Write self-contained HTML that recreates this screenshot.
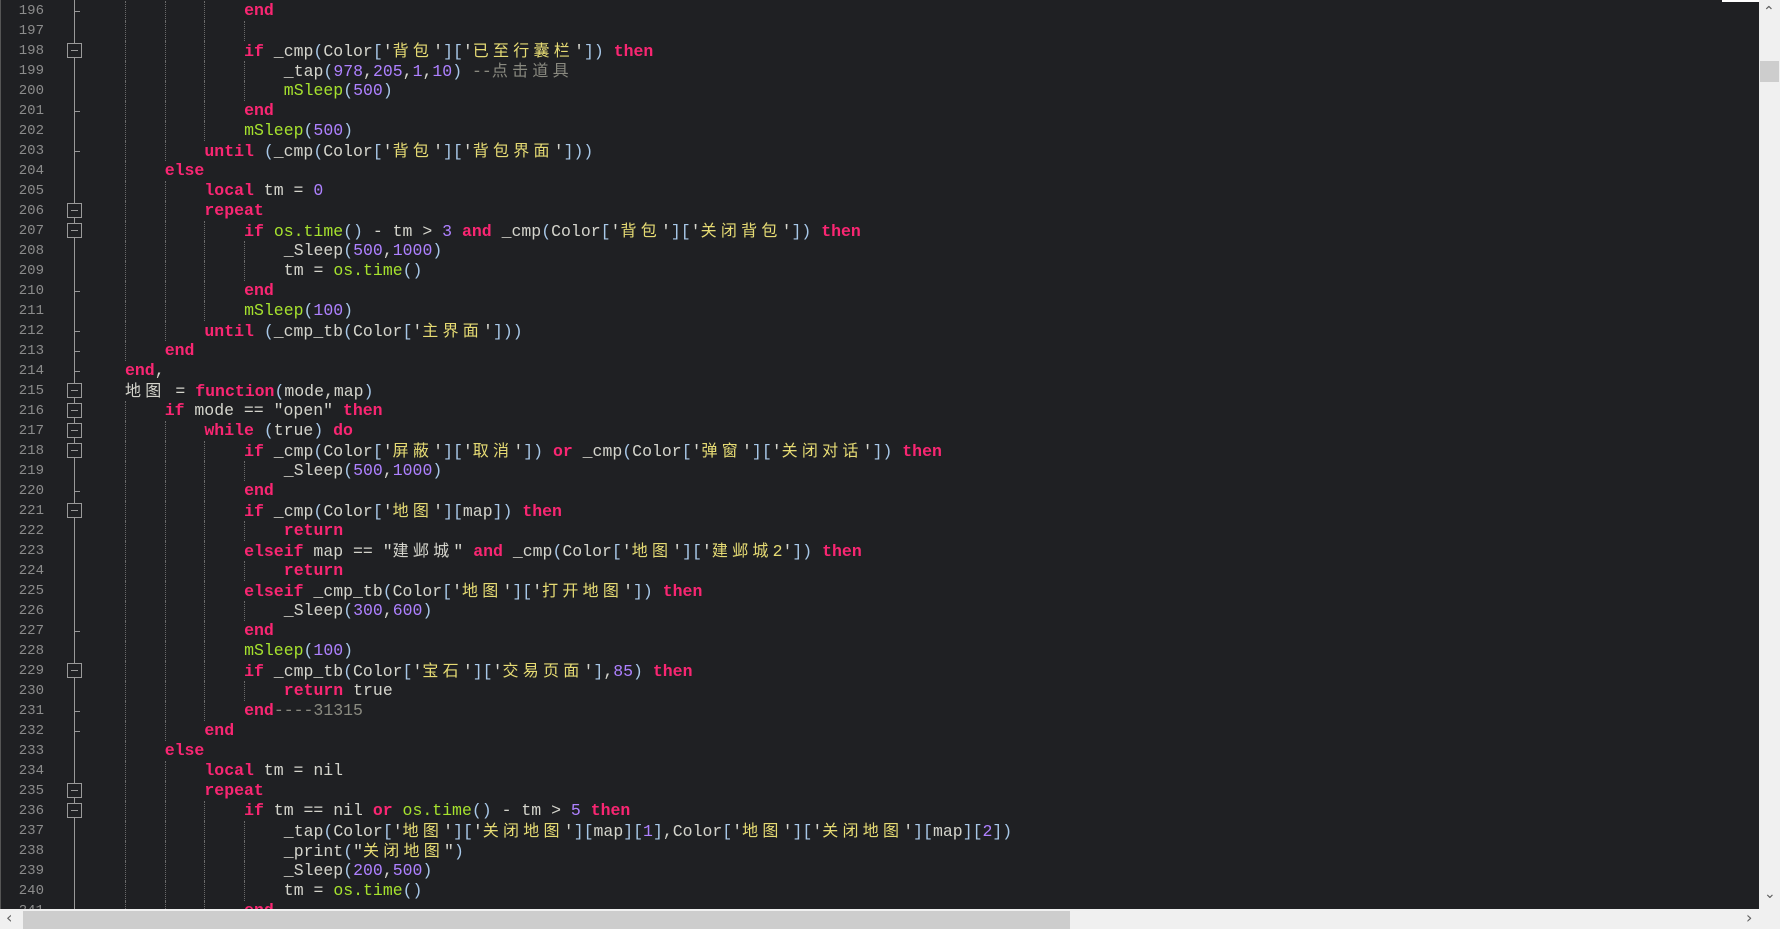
<!DOCTYPE html>
<html><head><meta charset="utf-8"><style>
html,body{margin:0;padding:0;background:#1f2023;width:1780px;height:929px;overflow:hidden}
#ed{position:absolute;left:0;top:0;width:1759px;height:909px;overflow:hidden;background:#1f2023;border-left:1px solid #555}
.ln{position:absolute;left:0;width:43px;text-align:right;font:14px "Liberation Mono",monospace;color:#8c8c8c;line-height:20px}
.cd{position:absolute;left:84px;white-space:pre;font:16.5px "Liberation Mono","Noto Sans CJK SC",monospace;line-height:20px;height:20px;color:#d4d4cc}
.z{letter-spacing:4.25px;font-family:"Noto Sans CJK SC",sans-serif;font-size:16px;line-height:1}
.k{color:#f92672;font-weight:bold}.s{color:#e6db74}.n{color:#ae81ff}.f{color:#a6e22e}.c{color:#8a8a80}.p{color:#a8c8e8}
.g{position:absolute;width:0;border-left:1px dotted #6a6a6a;height:20px}
.box{position:absolute;left:66px;width:13px;height:13px;border:1px solid #999;background:#1f2023}
.box:after{content:"";position:absolute;left:3px;right:3px;top:6px;height:1px;background:#999}
.tk{position:absolute;left:73px;width:6px;height:1px;background:#999}
#fl{position:absolute;left:73px;top:0;width:1px;height:909px;background:#999}
#vs{position:absolute;left:1759px;top:0;width:21px;height:909px;background:#f0f0f0}
#vt{position:absolute;left:1760px;top:61px;width:19px;height:21px;background:#cdcdcd}
#hs{position:absolute;left:0;top:909px;width:1780px;height:20px;background:#f0f0f0}
#ht{position:absolute;left:23px;top:911px;width:1047px;height:18px;background:#cdcdcd}
.ar{position:absolute;font:16px "DejaVu Sans",sans-serif;color:#606060}
</style></head><body>
<div id="ed">
<div id="fl"></div>
<div id="L"></div>
</div>
<div id="vs"></div><div id="vt"></div>
<div class="ar" style="left:1763px;top:4px;font-size:14px">&#8963;</div>
<div class="ar" style="left:1764px;top:886px;font-size:14px">&#8964;</div>
<div style="position:absolute;left:1722px;top:0;width:37px;height:2px;background:#fff"></div>
<div id="hs"></div><div id="ht"></div>
<div class="ar" style="left:6px;top:908px">&#8249;</div>
<div class="ar" style="left:1746px;top:908px">&#8250;</div>
<script>
var lines=[
[196,3,'<b class=k>end</b>'],
[197,-1,''],
[198,3,'<b class=k>if</b> _cmp<span class=p>(</span>Color<span class=p>[</span>\'<span class="s z">背包</span>\'<span class=p>][</span>\'<span class="s z">已至行囊栏</span>\'<span class=p>])</span> <b class=k>then</b>'],
[199,4,'_tap<span class=p>(</span><span class=n>978</span>,<span class=n>205</span>,<span class=n>1</span>,<span class=n>10</span><span class=p>)</span> <span class=c>--<span class=z>点击道具</span></span>'],
[200,4,'<span class=f>mSleep</span><span class=p>(</span><span class=n>500</span><span class=p>)</span>'],
[201,3,'<b class=k>end</b>'],
[202,3,'<span class=f>mSleep</span><span class=p>(</span><span class=n>500</span><span class=p>)</span>'],
[203,2,'<b class=k>until</b> <span class=p>(</span>_cmp<span class=p>(</span>Color<span class=p>[</span>\'<span class="s z">背包</span>\'<span class=p>][</span>\'<span class="s z">背包界面</span>\'<span class=p>]))</span>'],
[204,1,'<b class=k>else</b>'],
[205,2,'<b class=k>local</b> tm = <span class=n>0</span>'],
[206,2,'<b class=k>repeat</b>'],
[207,3,'<b class=k>if</b> <span class=f>os.time</span><span class=p>()</span> - tm &gt; <span class=n>3</span> <b class=k>and</b> _cmp<span class=p>(</span>Color<span class=p>[</span>\'<span class="s z">背包</span>\'<span class=p>][</span>\'<span class="s z">关闭背包</span>\'<span class=p>])</span> <b class=k>then</b>'],
[208,4,'_Sleep<span class=p>(</span><span class=n>500</span>,<span class=n>1000</span><span class=p>)</span>'],
[209,4,'tm = <span class=f>os.time</span><span class=p>()</span>'],
[210,3,'<b class=k>end</b>'],
[211,3,'<span class=f>mSleep</span><span class=p>(</span><span class=n>100</span><span class=p>)</span>'],
[212,2,'<b class=k>until</b> <span class=p>(</span>_cmp_tb<span class=p>(</span>Color<span class=p>[</span>\'<span class="s z">主界面</span>\'<span class=p>]))</span>'],
[213,1,'<b class=k>end</b>'],
[214,0,'<b class=k>end</b>,'],
[215,0,'<span class=z>地图</span> = <b class=k>function</b><span class=p>(</span>mode,map<span class=p>)</span>'],
[216,1,'<b class=k>if</b> mode == "open" <b class=k>then</b>'],
[217,2,'<b class=k>while</b> <span class=p>(</span>true<span class=p>)</span> <b class=k>do</b>'],
[218,3,'<b class=k>if</b> _cmp<span class=p>(</span>Color<span class=p>[</span>\'<span class="s z">屏蔽</span>\'<span class=p>][</span>\'<span class="s z">取消</span>\'<span class=p>])</span> <b class=k>or</b> _cmp<span class=p>(</span>Color<span class=p>[</span>\'<span class="s z">弹窗</span>\'<span class=p>][</span>\'<span class="s z">关闭对话</span>\'<span class=p>])</span> <b class=k>then</b>'],
[219,4,'_Sleep<span class=p>(</span><span class=n>500</span>,<span class=n>1000</span><span class=p>)</span>'],
[220,3,'<b class=k>end</b>'],
[221,3,'<b class=k>if</b> _cmp<span class=p>(</span>Color<span class=p>[</span>\'<span class="s z">地图</span>\'<span class=p>][</span>map<span class=p>])</span> <b class=k>then</b>'],
[222,4,'<b class=k>return</b>'],
[223,3,'<b class=k>elseif</b> map == "<span class=z>建邺城</span>" <b class=k>and</b> _cmp<span class=p>(</span>Color<span class=p>[</span>\'<span class="s z">地图</span>\'<span class=p>][</span>\'<span class="s"><span class=z>建邺城</span>2</span>\'<span class=p>])</span> <b class=k>then</b>'],
[224,4,'<b class=k>return</b>'],
[225,3,'<b class=k>elseif</b> _cmp_tb<span class=p>(</span>Color<span class=p>[</span>\'<span class="s z">地图</span>\'<span class=p>][</span>\'<span class="s z">打开地图</span>\'<span class=p>])</span> <b class=k>then</b>'],
[226,4,'_Sleep<span class=p>(</span><span class=n>300</span>,<span class=n>600</span><span class=p>)</span>'],
[227,3,'<b class=k>end</b>'],
[228,3,'<span class=f>mSleep</span><span class=p>(</span><span class=n>100</span><span class=p>)</span>'],
[229,3,'<b class=k>if</b> _cmp_tb<span class=p>(</span>Color<span class=p>[</span>\'<span class="s z">宝石</span>\'<span class=p>][</span>\'<span class="s z">交易页面</span>\'<span class=p>]</span>,<span class=n>85</span><span class=p>)</span> <b class=k>then</b>'],
[230,4,'<b class=k>return</b> true'],
[231,3,'<b class=k>end</b><span class=c>----31315</span>'],
[232,2,'<b class=k>end</b>'],
[233,1,'<b class=k>else</b>'],
[234,2,'<b class=k>local</b> tm = nil'],
[235,2,'<b class=k>repeat</b>'],
[236,3,'<b class=k>if</b> tm == nil <b class=k>or</b> <span class=f>os.time</span><span class=p>()</span> - tm &gt; <span class=n>5</span> <b class=k>then</b>'],
[237,4,'_tap<span class=p>(</span>Color<span class=p>[</span>\'<span class="s z">地图</span>\'<span class=p>][</span>\'<span class="s z">关闭地图</span>\'<span class=p>][</span>map<span class=p>][</span><span class=n>1</span><span class=p>]</span>,Color<span class=p>[</span>\'<span class="s z">地图</span>\'<span class=p>][</span>\'<span class="s z">关闭地图</span>\'<span class=p>][</span>map<span class=p>][</span><span class=n>2</span><span class=p>])</span>'],
[238,4,'_print<span class=p>(</span>"<span class="s z">关闭地图</span>"<span class=p>)</span>'],
[239,4,'_Sleep<span class=p>(</span><span class=n>200</span>,<span class=n>500</span><span class=p>)</span>'],
[240,4,'tm = <span class=f>os.time</span><span class=p>()</span>'],
[241,3,'<b class=k>end</b>']
];
var boxes=[198,206,207,215,216,217,218,221,229,235,236];
var ticks=[196,201,203,210,212,213,214,220,227,231,232];
var h='';
lines.forEach(function(l){
 var n=l[0],lv=l[1],t=1+(n-196)*20;
 h+='<div class=ln style="top:'+t+'px">'+n+'</div>';
 var gl=lv<0?4:lv;
 for(var i=0;i<gl;i++){h+='<div class=g style="left:'+(124+i*39.7)+'px;top:'+t+'px"></div>';}
 if(lv>=0){h+='<div class=cd style="left:'+(124+lv*39.7)+'px;top:'+t+'px">'+l[2]+'</div>';}
 if(boxes.indexOf(n)>=0)h+='<div class=box style="top:'+(t+2)+'px"></div>';
 if(ticks.indexOf(n)>=0)h+='<div class=tk style="top:'+(t+10)+'px"></div>';
});
document.getElementById('L').innerHTML=h;
</script>
</body></html>
